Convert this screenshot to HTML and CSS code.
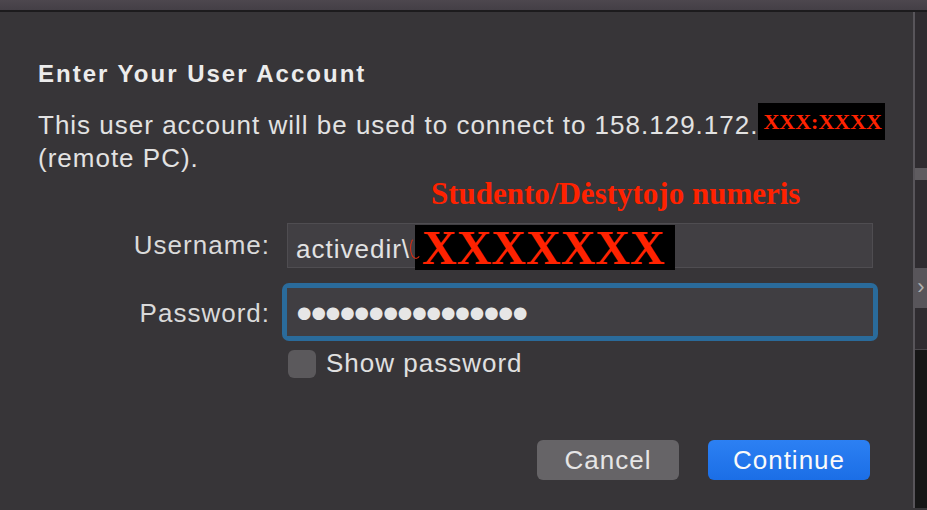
FILE: index.html
```html
<!DOCTYPE html>
<html lang="en">
<head>
<meta charset="utf-8">
<title>Enter Your User Account</title>
<link rel="stylesheet" href="styles.css">
</head>
<body>
<div class="titlebar"></div>
<div class="main">
  <div class="dialog">
    <h1 class="title">Enter Your User Account</h1>
    <p class="desc">This user account will be used to connect to 158.129.172.<span class="redact-ip">XXX:XXXX</span><br>(remote PC).</p>
    <div class="note">Studento/Dėstytojo numeris</div>
    <div class="form">
      <label class="label">Username:</label>
      <div class="field user"><span class="user-text">activedir\</span><span class="redact-user">XXXXXXX</span></div>
      <label class="label pw-label">Password:</label>
      <div class="focus"><div class="field pw">●●●●●●●●●●●●●●●●</div></div>
      <div></div>
      <div class="check-row"><span class="checkbox"></span><span>Show password</span></div>
    </div>
    <div class="buttons">
      <button class="btn cancel">Cancel</button>
      <button class="btn continue">Continue</button>
    </div>
  </div>
  <div class="divider"></div>
  <div class="side">
    <div class="side-top"></div>
    <div class="side-knob"></div>
    <div class="side-mid"></div>
    <div class="side-arrow">›</div>
    <div class="side-mid2"></div>
    <div class="side-dark"></div>
  </div>
</div>
</body>
</html>
```

FILE: styles.css
```css
* { box-sizing: border-box; }
html, body { margin: 0; padding: 0; }
body {
  width: 927px;
  height: 510px;
  overflow: hidden;
  background: #373538;
  font-family: "Liberation Sans", Arial, sans-serif;
  color: #e2e2e2;
}
.titlebar {
  height: 12px;
  background: linear-gradient(#4d474e, #443f46);
  border-bottom: 2px solid #1c1b1d;
}
.main {
  display: flex;
  height: 496px;
}
.dialog {
  flex: 1;
  min-width: 0;
  padding: 0 43px 0 38px;
  background: #373538;
}
.title {
  margin: 48px 0 0;
  font-size: 24px;
  font-weight: bold;
  line-height: 28px;
  letter-spacing: 2px;
  color: #ececec;
}
.desc {
  margin: 21px 0 0;
  font-size: 26px;
  line-height: 33px;
  letter-spacing: 1px;
  color: #e2e2e2;
  white-space: nowrap;
}
.redact-ip {
  display: inline-block;
  height: 37px;
  background: #000;
  color: #ff2200;
  font-family: "Liberation Serif", "Times New Roman", serif;
  font-weight: bold;
  font-size: 22px;
  line-height: 37px;
  letter-spacing: 0;
  padding: 0 3px 0 5px;
  margin-left: 0;
  margin-top: -7px;
  vertical-align: 5px;
}
.note {
  margin: 2px 0 0 393px;
  font-family: "Liberation Serif", "Times New Roman", serif;
  font-weight: bold;
  font-size: 31px;
  line-height: 34px;
  color: #ff2200;
  white-space: nowrap;
}
.form {
  margin-top: 12px;
  display: grid;
  grid-template-columns: 232px 586px;
  column-gap: 17px;
  row-gap: 15px;
  align-items: center;
}
.label {
  text-align: right;
  font-size: 26px;
  letter-spacing: 1px;
  color: #dadada;
}
.pw-label { padding-top: 3px; }
.field {
  height: 45px;
  background: #413f43;
  border: 1px solid #4f4d51;
  font-size: 26px;
  letter-spacing: 1px;
  color: #e2e2e2;
  white-space: nowrap;
}
.user {
  display: flex;
  align-items: flex-start;
  padding-left: 8px;
}
.user-text {
  flex: 0 0 119px;
  line-height: 43px;
  padding-top: 4px;
}
.redact-user {
  position: relative;
  flex: 0 0 260px;
  height: 45px;
  margin-top: 1px;
  background: #000;
  color: #ff2200;
  font-family: "Liberation Serif", "Times New Roman", serif;
  font-weight: bold;
  font-size: 48px;
  line-height: 45px;
  letter-spacing: 0;
  padding-left: 7px;
}
.redact-user::before {
  content: "";
  position: absolute;
  left: -5px;
  top: 12px;
  width: 10px;
  height: 20px;
  border: 1.5px solid #e02a10;
  border-right-color: transparent;
  border-top-color: transparent;
  border-radius: 50%;
}
.focus {
  margin-left: -5px;
  margin-right: -5px;
  padding: 5px;
  border-radius: 7px;
  background: #2a6b9b;
}
.field.pw {
  height: 48px;
  border: none;
  background: #403e42;
  padding-left: 10px;
  font-family: "DejaVu Sans", sans-serif;
  font-size: 16.5px;
  letter-spacing: 0;
  line-height: 50px;
  color: #e6e6e6;
}
.check-row {
  display: flex;
  align-items: center;
  gap: 10px;
  margin-top: -8px;
  font-size: 26px;
  letter-spacing: 1px;
  color: #e0e0e0;
}
.checkbox {
  width: 28px;
  height: 28px;
  border-radius: 6px;
  background: #5b595c;
  margin-left: 1px;
}
.buttons {
  display: flex;
  justify-content: flex-end;
  gap: 29px;
  margin-top: 61px;
}
.btn {
  height: 40px;
  border: none;
  border-radius: 6px;
  font-family: "Liberation Sans", Arial, sans-serif;
  font-size: 26px;
  letter-spacing: 1px;
  color: #e6e6e6;
  padding: 0;
}
.cancel {
  width: 142px;
  background: #666467;
}
.continue {
  width: 162px;
  background: linear-gradient(#2c80f3, #1b6ee6);
  color: #fafafa;
}
.divider {
  width: 2px;
  background: #58555a;
}
.side {
  width: 12px;
  display: flex;
  flex-direction: column;
  background: #2f2c30;
}
.side-top { height: 156px; }
.side-knob { height: 12px; background: #5f5c60; }
.side-mid { height: 88px; }
.side-arrow {
  height: 40px;
  background: #58555a;
  color: #b0b0b0;
  font-size: 22px;
  line-height: 38px;
  text-align: center;
}
.side-mid2 { height: 42px; border-bottom: 1px solid #4a474b; }
.side-dark { flex: 1; background: #161616; }
```
